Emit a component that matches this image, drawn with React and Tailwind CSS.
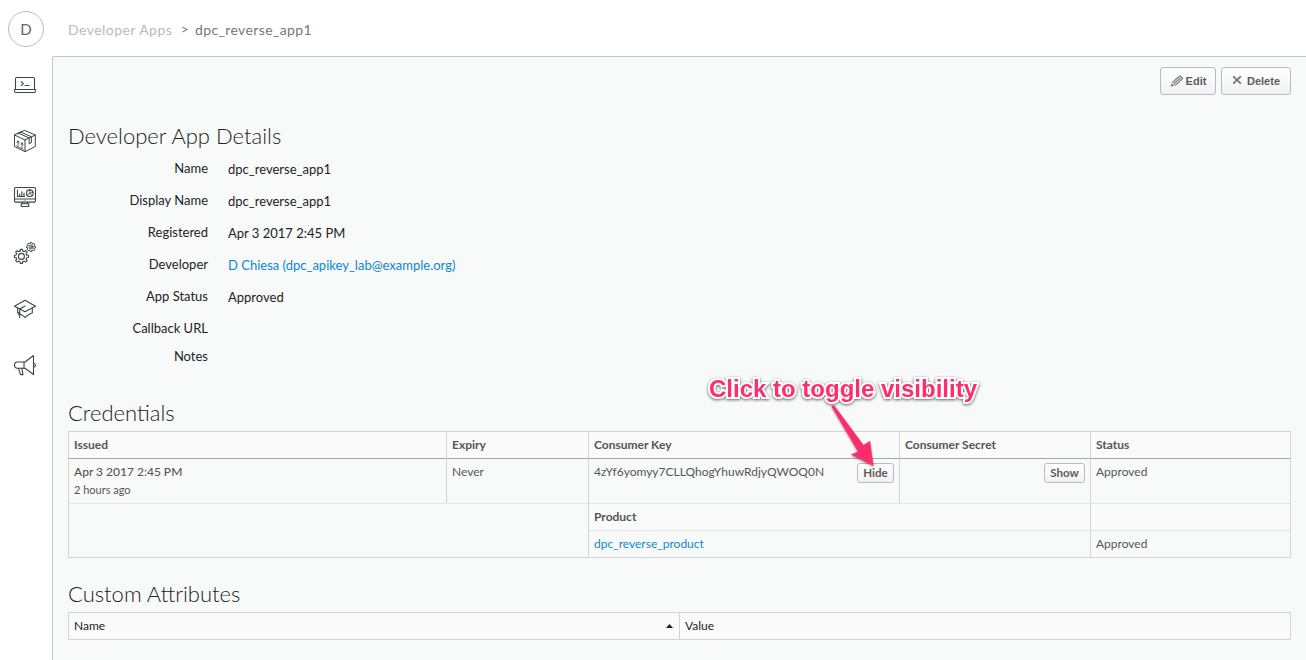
import React from "react";

const iconProps = {
  width: 24,
  height: 24,
  viewBox: "0 0 24 24",
  fill: "none",
  stroke: "#3f4444",
  strokeWidth: 1.1,
  strokeLinejoin: "round",
  strokeLinecap: "round",
  overflow: "visible",
};

function LaptopIcon() {
  return (
    <svg {...iconProps}>
      <path d="M3.5 16V5.7Q3.5 4.5 4.7 4.5H21.3Q22.5 4.5 22.5 5.7V16" />
      <path d="M2.5 16.5H23.5V18Q23.5 19.5 22 19.5H4Q2.5 19.5 2.5 18Z" />
      <path d="M9.2 8.8L11.4 10.6L9.2 12.5M13 12.5H17" />
    </svg>
  );
}

function BoxIcon() {
  return (
    <svg {...iconProps} strokeWidth={1}>
      <path d="M13 1.5L23.3 6V17.5L13 22.7L2.5 17.5V6Z" />
      <path d="M2.5 6L13 11L23.3 6M13 11V22.5" />
      <path d="M6.6 4.2L17.2 9V14.8L19.4 13.7V7.8L9 3.2M5.2 5L10 2.8" />
      <path d="M6 16.8V12M4.9 13.4L6 11.8L7.1 14M10 18.8V14M8.9 15.2L10 13.7L11.1 15.8M4.7 17.2L11.2 20.3" strokeWidth={0.8} />
    </svg>
  );
}

function MonitorIcon() {
  return (
    <svg {...iconProps}>
      <rect x="2.5" y="2.5" width="21" height="14.6" rx="1.3" />
      <path d="M3 14H23M10.5 17.2V18.5M15.5 17.2V18.5M9.2 18.8H16.8V21.5H9.2Z" />
      <path d="M5.5 5V11.5H12.6M7.7 11V9M9.8 11V6.8M12 11V8" />
      <circle cx="17.8" cy="8.2" r="3.3" />
      <path d="M17.8 8.2V5M17.8 8.2L21 7.4M17.8 8.2L15.2 10.2M17.8 8.2L20 10.6M13 15.6H13.1" strokeWidth={0.8} />
    </svg>
  );
}

const TEETH = [0, 45, 90, 135, 180, 225, 270, 315];

function Gear({ x, y, scale, width }) {
  return (
    <g transform={`translate(${x} ${y}) scale(${scale})`} strokeWidth={width}>
      {TEETH.map((a) => (
        <path
          key={a}
          transform={`rotate(${a})`}
          d="M-1.4 -5.3L-1.1 -7H1.1L1.4 -5.3Q2.1 -5.2 2.75 -4.75"
        />
      ))}
      <circle r="3" />
    </g>
  );
}

function GearsIcon() {
  return (
    <svg {...iconProps}>
      <Gear x={9.4} y={15.4} scale={1} width={1.1} />
      <Gear x={19} y={6} scale={0.66} width={1.4} />
      <circle cx="19" cy="6" r="0.5" strokeWidth={0.8} />
    </svg>
  );
}

function CapIcon() {
  return (
    <svg {...iconProps}>
      <path d="M13 3.2L23.5 9.2L13 14.8L2.5 9.2Z" />
      <path d="M5.6 11V15.8M20.3 11V16Q17 16.8 13 20.4Q11 18.4 8.5 17.2M13 9L7.7 12V20.6M6.8 15.4V17.6" />
    </svg>
  );
}

function MegaphoneIcon() {
  return (
    <svg {...iconProps}>
      <path d="M21.5 2.5V21.5L13 15.3H5.5Q2.5 15.3 2.5 12.1Q2.5 9 5.5 9H13Z" />
      <path d="M12 9.1V15.2M21.7 10.2Q23.4 10.6 23.4 12.2Q23.4 13.8 21.7 14.2M6.5 15.4L8.5 21.6H11L9.8 15.4" />
    </svg>
  );
}

const NAV = [LaptopIcon, BoxIcon, MonitorIcon, GearsIcon, CapIcon, MegaphoneIcon];

function PencilIcon() {
  return (
    <svg width="14" height="14" viewBox="0 0 14 14" className="mb-px mr-[2px]">
      <path d="M0.5 12.8L1.6 9L4.6 11.8Z" fill="#888" />
      <path
        d="M2.2 8.6L9.4 2.2M3.6 10L10.8 3.6M5 11.4L12.2 5"
        stroke="#777"
        strokeWidth="1.2"
      />
      <path d="M9.6 1.6L13 4.8" stroke="#888" strokeWidth="1.4" />
    </svg>
  );
}

function CrossIcon() {
  return (
    <svg width="10" height="10" viewBox="0 0 10 10" className="mb-[2px] mr-[5px]">
      <path d="M1.2 1.4L8.8 8.6M8.8 1.4L1.2 8.6" stroke="#777" strokeWidth="1.9" />
    </svg>
  );
}

function ToolButton({ children, className }) {
  return (
    <button
      className={`flex h-7 items-center justify-center rounded-[3px] border border-[#b5bdc4] bg-linear-to-b from-white to-[#f1f1f1] font-['Liberation_Sans',sans-serif] text-[11px] font-bold text-[#5c5c5c] ${className}`}
    >
      {children}
    </button>
  );
}

function SmallButton({ children, className }) {
  return (
    <button
      className={`flex h-5 items-center justify-center rounded-[3px] border border-[#b5bdc4] bg-linear-to-b from-white to-[#f1f1f1] text-[11.5px] font-bold leading-none text-[#5c5c5c] ${className}`}
    >
      {children}
    </button>
  );
}

const DETAILS = [
  ["Name", "dpc_reverse_app1"],
  ["Display Name", "dpc_reverse_app1"],
  ["Registered", "Apr 3 2017 2:45 PM"],
  ["Developer", "D Chiesa (dpc_apikey_lab@example.org)", true],
  ["App Status", "Approved"],
  ["Callback URL", ""],
];

function SectionTitle({ children, className }) {
  return (
    <h2 className={`text-[22px] font-light leading-7 text-[#222] ${className}`}>{children}</h2>
  );
}

function HeadCell({ children }) {
  return (
    <div className="border-l border-t border-[#d3d5d5] bg-[#fafafa] pl-[5px] font-bold leading-[26px]">
      {children}
    </div>
  );
}

function Credentials() {
  return (
    <div className="grid h-[127px] w-[1223px] grid-cols-[378px_142px_311px_191px_1fr] grid-rows-[27px_45px_27px_27px] border-b border-r border-[#d3d5d5] text-[12px] text-[#555]">
      <HeadCell>Issued</HeadCell>
      <HeadCell>Expiry</HeadCell>
      <HeadCell>Consumer Key</HeadCell>
      <HeadCell>Consumer Secret</HeadCell>
      <HeadCell>Status</HeadCell>

      <div className="border-l border-t border-l-[#d3d5d5] border-t-[#a5a7a7] pl-[5px] pt-1">
        <div className="font-medium leading-[18px]">Apr 3 2017 2:45 PM</div>
        <div className="text-[11px] leading-[18px]">2 hours ago</div>
      </div>
      <div className="border-l border-t border-l-[#d3d5d5] border-t-[#a5a7a7] pl-[5px] pt-1 leading-[18px]">
        Never
      </div>
      <div className="flex justify-between border-l border-t border-l-[#d3d5d5] border-t-[#a5a7a7] pl-[5px] pr-[5px] pt-1 leading-[18px]">
        <span>4zYf6yomyy7CLLQhogYhuwRdjyQWOQ0N</span>
        <SmallButton className="w-[37px]">Hide</SmallButton>
      </div>
      <div className="flex justify-end border-l border-t border-l-[#d3d5d5] border-t-[#a5a7a7] pr-[5px] pt-1">
        <SmallButton className="w-[41px]">Show</SmallButton>
      </div>
      <div className="border-l border-t border-l-[#d3d5d5] border-t-[#a5a7a7] pl-[5px] pt-1 leading-[18px]">
        Approved
      </div>

      <div className="col-span-2 row-span-2 border-l border-t border-l-[#d3d5d5] border-t-[#e4e6e6]" />
      <div className="col-span-2 border-l border-t border-l-[#d3d5d5] border-t-[#e4e6e6] bg-[#fafafa] pl-[5px] font-bold leading-[26px]">
        Product
      </div>
      <div className="border-l border-t border-l-[#d3d5d5] border-t-[#e4e6e6] bg-[#fafafa]" />
      <div className="col-span-2 border-l border-t border-l-[#d3d5d5] border-t-[#e4e6e6] pl-[5px] leading-[26px] text-[#0d87cf]">
        dpc_reverse_product
      </div>
      <div className="border-l border-t border-l-[#d3d5d5] border-t-[#e4e6e6] pl-[5px] leading-[26px]">
        Approved
      </div>
    </div>
  );
}

function Callout() {
  return (
    <div className="pointer-events-none absolute left-[709px] top-[372px]">
      <svg width="280" height="104" viewBox="0 0 280 104" className="absolute left-0 top-0 overflow-visible">
        <path
          d="M122.5 34.5Q124 32.5 126 34.5L154.5 73L161 69L164.5 94L142 82.5L149 79.5Z"
          fill="#ff2d6b"
          className="[filter:drop-shadow(0_1px_1px_rgba(0,0,0,0.45))]"
        />
      </svg>
      <div className="relative whitespace-nowrap font-['Liberation_Sans',sans-serif] text-[24px] font-bold leading-[34px] text-[#ff2d6b] [-webkit-text-stroke:4px_white] [paint-order:stroke_fill] [filter:drop-shadow(0_1px_1.5px_rgba(0,0,0,0.6))]">
        Click to toggle visibility
      </div>
    </div>
  );
}

export default function App() {
  return (
    <div className="relative flex h-[660px] w-[1306px] overflow-hidden bg-white font-[Lato,sans-serif]">
      <aside className="flex w-[52px] shrink-0 flex-col pl-2 pt-[11px]">
        <div className="flex size-9 items-center justify-center rounded-full border border-[#bbb] text-[15px] text-[#666]">
          D
        </div>
        <nav className="mt-[26px] flex flex-col gap-8 pl-1">
          {NAV.map((Icon, i) => (
            <Icon key={i} />
          ))}
        </nav>
      </aside>
      <div className="flex min-w-0 flex-1 flex-col">
        <header className="flex h-14 shrink-0 items-center pl-4 pt-0.5 text-[14px] text-[#777]">
          <span className="w-[105px] whitespace-nowrap tracking-[0.46px] text-[#bababa]">
            Developer Apps
          </span>
          <span className="ml-[8px] w-[8px] pt-px text-[13px]">&gt;</span>
          <span className="ml-[6px] tracking-[0.38px]">dpc_reverse_app1</span>
        </header>
        <main className="flex-1 rounded-tl-[2px] border-l border-t border-[#c6c8c8] bg-[#f8faf9] pl-[15px]">
          <div className="flex justify-end gap-[5px] pr-[15px] pt-[10px]">
            <ToolButton className="w-14">
              <PencilIcon />
              Edit
            </ToolButton>
            <ToolButton className="w-[70px]">
              <CrossIcon />
              Delete
            </ToolButton>
          </div>
          <SectionTitle className="mt-[27px]">Developer App Details</SectionTitle>
          <dl className="mt-0.5 text-[13px] leading-8 text-[#222]">
            {DETAILS.map(([label, value, link]) => (
              <div key={label} className="flex h-8">
                <dt className="w-[140px] text-right">{label}</dt>
                <dd className={link ? "pl-5 pt-px text-[#0d87cf]" : "pl-5 pt-px"}>{value}</dd>
              </div>
            ))}
            <div className="-mt-1 flex h-8">
              <dt className="w-[140px] text-right">Notes</dt>
            </div>
          </dl>
          <SectionTitle className="mt-[27px]">Credentials</SectionTitle>
          <div className="mt-1">
            <Credentials />
          </div>
          <SectionTitle className="mt-[22px]">Custom Attributes</SectionTitle>
          <div className="mt-1 grid h-7 w-[1223px] grid-cols-[611px_1fr] border border-[#d3d5d5] bg-[#fafafa] text-[12px] leading-[26px] text-[#222]">
            <div className="flex items-center justify-between border-r border-[#d3d5d5] pl-[5px] pr-[6px]">
              Name
              <svg width="7" height="4" viewBox="0 0 7 4">
                <path d="M0 4L3.5 0L7 4Z" fill="#222" />
              </svg>
            </div>
            <div className="pl-[5px]">Value</div>
          </div>
        </main>
      </div>
      <Callout />
    </div>
  );
}
